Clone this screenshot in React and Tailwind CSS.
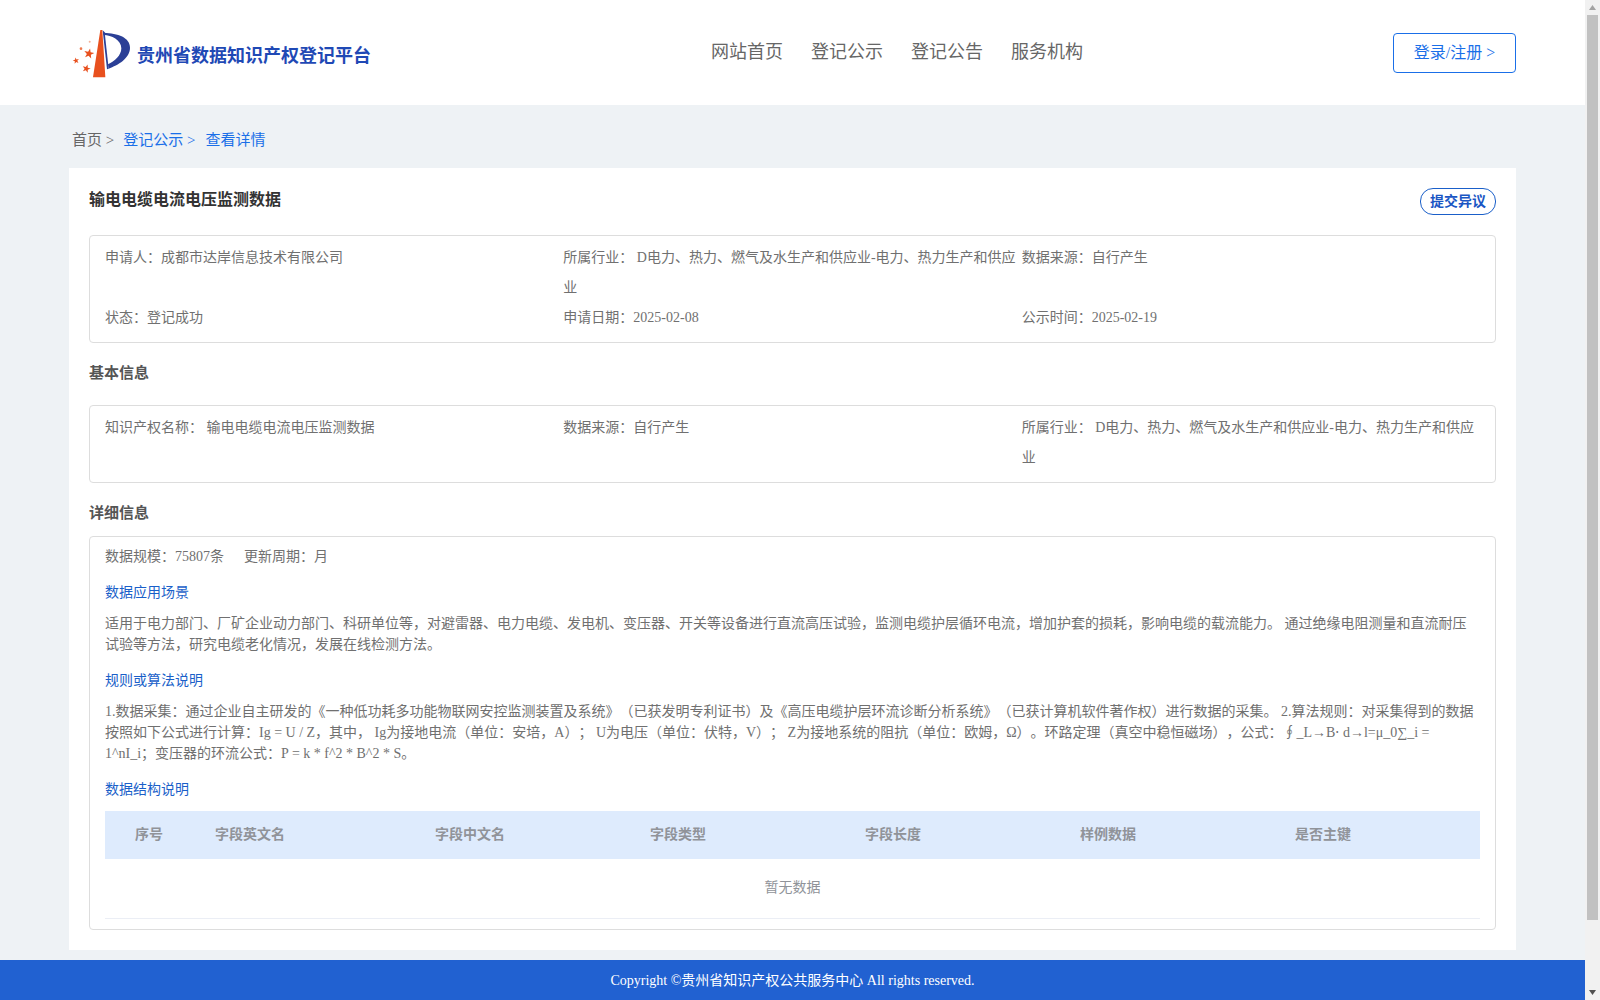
import React from "react";

function starPoints(cx, cy, r, rot = 0) {
  const pts = [];
  for (let i = 0; i < 10; i++) {
    const rad = i % 2 === 0 ? r : r * 0.4;
    const a = -Math.PI / 2 + rot + (i * Math.PI) / 5;
    pts.push(`${(cx + rad * Math.cos(a)).toFixed(1)},${(cy + rad * Math.sin(a)).toFixed(1)}`);
  }
  return pts.join(" ");
}

function Logo() {
  return (
    <svg width="66" height="56" viewBox="0 0 198 168" className="shrink-0">
      <path d="M107 24 C150 24 186 38 186 68 C186 100 150 120 122 131 L120 118 C140 108 160 92 160 70 C160 45 130 30 107 30 Z" fill="#2b3f96" />
      <polygon points="104,16 110,22 122,131 117,133" fill="#2b3f96" />
      <polygon points="97,15 103,15 112,157 75,157" fill="#e8501e" />
      <polygon points={starPoints(63, 86, 16, 0.2)} fill="#e8501e" />
      <polygon points={starPoints(24, 107, 10, -0.2)} fill="#e8501e" />
      <polygon points={starPoints(55, 131, 13, 0.3)} fill="#e8501e" />
      <circle cx="39" cy="71" r="4" fill="#ee7a50" />
      <circle cx="65" cy="50" r="3" fill="#f4b098" />
    </svg>
  );
}

function Scrollbar() {
  return (
    <div className="w-[15px] h-full shrink-0 flex flex-col bg-[#f1f1f1]">
      <div className="h-[15px] flex items-center justify-center">
        <svg width="7" height="5" viewBox="0 0 7 5"><polygon points="3.5,0 7,5 0,5" fill="#a3a3a3" /></svg>
      </div>
      <div className="h-[905px] mx-[2px] bg-[#c1c1c1]" />
      <div className="flex-1" />
      <div className="h-[15px] flex items-center justify-center">
        <svg width="7" height="5" viewBox="0 0 7 5"><polygon points="0,0 7,0 3.5,5" fill="#505050" /></svg>
      </div>
    </div>
  );
}

function Item({ label, value }) {
  return <div className="leading-[30px] text-[14px] text-[#707070]">{label}{value}</div>;
}

const COLS = ["字段英文名", "字段中文名", "字段类型", "字段长度", "样例数据", "是否主键"];
const INDUSTRY = " D电力、热力、燃气及水生产和供应业-电力、热力生产和供应业";

export default function App() {
  return (
    <div className="w-[1600px] h-[1000px] overflow-hidden flex bg-[#eef2f5] [text-spacing-trim:space-all] font-['Liberation_Serif','Noto_Sans_CJK_SC',serif]">
      <div className="flex-1 min-w-0 h-full flex flex-col">
        <header className="h-[105px] shrink-0 bg-white flex items-center pl-[68px] pr-[69px]">
          <div className="w-[643px] flex items-center gap-[3px]">
            <Logo />
            <span className="text-[18px] font-bold text-[#1f49b5] font-['Noto_Sans_CJK_SC',sans-serif] leading-[24px] mt-[2px]">贵州省数据知识产权登记平台</span>
          </div>
          <nav className="flex gap-[28px] text-[18px] text-[#666] pb-[1px]">
            <span>网站首页</span>
            <span>登记公示</span>
            <span>登记公告</span>
            <span>服务机构</span>
          </nav>
          <button className="ml-auto w-[123px] h-[40px] pt-[1px] border border-[#1a6fe8] rounded-[4px] text-[16px] text-[#1a6fe8]">登录/注册 &gt;</button>
        </header>

        <main className="flex-1 min-h-0 overflow-hidden">
          <div className="h-[63px] pt-[24px] pl-[72px] text-[15px] leading-[22px] flex">
            <span className="text-[#666]">首页 &gt;</span>
            <span className="text-[#1a6fe8] ml-[9px]">登记公示 &gt;</span>
            <span className="text-[#1a6fe8] ml-[10px]">查看详情</span>
          </div>

          <section className="mx-[69px] bg-white px-[20px] pt-[20px] pb-[20px]">
            <div className="flex items-start justify-between h-[27px] mb-[20px]">
              <h1 className="text-[16px] font-bold text-[#333] leading-[24px]">输电电缆电流电压监测数据</h1>
              <button className="w-[76px] h-[27px] border border-[#1a5fc9] rounded-[13px] text-[14px] font-bold text-[#1a56c4] leading-none">提交异议</button>
            </div>

            <div className="border border-[#ddd] rounded-[4px] px-[15px] pt-[7px] pb-[9px] grid grid-cols-3">
              <Item label="申请人：" value="成都市达岸信息技术有限公司" />
              <Item label="所属行业：" value={INDUSTRY} />
              <Item label="数据来源：" value="自行产生" />
              <Item label="状态：" value="登记成功" />
              <Item label="申请日期：" value="2025-02-08" />
              <Item label="公示时间：" value="2025-02-19" />
            </div>

            <div className="h-[62px] pb-[2px] flex items-center text-[15px] font-bold text-[#555]">基本信息</div>

            <div className="border border-[#ddd] rounded-[4px] px-[15px] pt-[7px] pb-[9px] grid grid-cols-3">
              <Item label="知识产权名称：" value=" 输电电缆电流电压监测数据" />
              <Item label="数据来源：" value="自行产生" />
              <Item label="所属行业：" value={INDUSTRY} />
            </div>

            <div className="h-[53px] pt-[7px] flex items-center text-[15px] font-bold text-[#555]">详细信息</div>

            <div className="border border-[#ddd] rounded-[4px] px-[15px] pt-[9px] pb-[10px] text-[14px] leading-[21px] text-[#707070]">
              <div className="flex gap-[20px]">
                <span>数据规模：75807条</span>
                <span>更新周期：月</span>
              </div>
              <div className="mt-[15px] text-[#1a5fc9]">数据应用场景</div>
              <p className="mt-[10px]">适用于电力部门、厂矿企业动力部门、科研单位等，对避雷器、电力电缆、发电机、变压器、开关等设备进行直流高压试验，监测电缆护层循环电流，增加护套的损耗，影响电缆的载流能力。 通过绝缘电阻测量和直流耐压试验等方法，研究电缆老化情况，发展在线检测方法。</p>
              <div className="mt-[15px] text-[#1a5fc9]">规则或算法说明</div>
              <p className="mt-[10px]">1.数据采集：通过企业自主研发的《一种低功耗多功能物联网安控监测装置及系统》（已获发明专利证书）及《高压电缆护层环流诊断分析系统》（已获计算机软件著作权）进行数据的采集。 2.算法规则：对采集得到的数据按照如下公式进行计算：Ig = U / Z，其中， Ig为接地电流（单位：安培，A）； U为电压（单位：伏特，V）； Z为接地系统的阻抗（单位：欧姆，Ω）。环路定理（真空中稳恒磁场），公式：∮_L→B⋅ d→l=μ_0∑_i =<br />1^nI_i；变压器的环流公式：P = k * f^2 * B^2 * S。</p>
              <div className="mt-[15px] text-[#1a5fc9]">数据结构说明</div>
              <div className="mt-[11px]">
                <div className="h-[48px] pb-[2px] bg-[#deebfd] flex items-center font-bold text-[#909399]">
                  <div className="w-[88px] text-center">序号</div>
                  <div className="flex-1 grid grid-cols-[220px_215px_215px_215px_215px_1fr] pl-[22px]">
                    {COLS.map((c) => (
                      <div key={c}>{c}</div>
                    ))}
                  </div>
                </div>
                <div className="h-[60px] border-b border-[#ebeef5] flex items-center justify-center text-[#909399] pb-[2px]">暂无数据</div>
              </div>
            </div>
          </section>
        </main>

        <footer className="h-[40px] shrink-0 bg-[#2161d1] pt-[1px] flex items-center justify-center text-[14px] text-white">
          Copyright ©贵州省知识产权公共服务中心 All rights reserved.
        </footer>
      </div>
      <Scrollbar />
    </div>
  );
}
